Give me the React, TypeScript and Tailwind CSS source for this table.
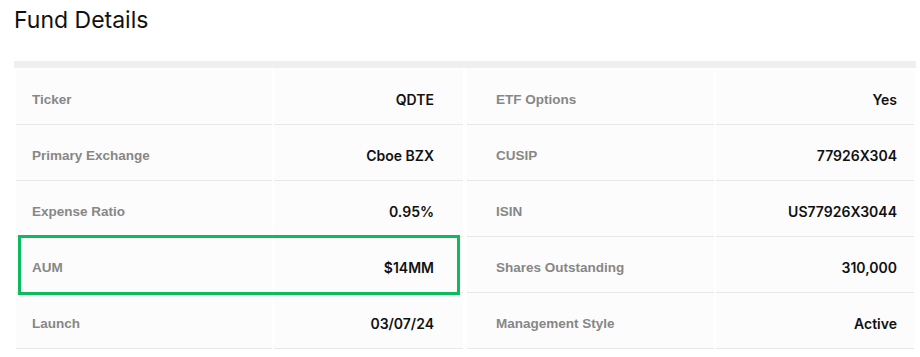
const LEFT = [
  { label: "Ticker", value: "QDTE" },
  { label: "Primary Exchange", value: "Cboe BZX" },
  { label: "Expense Ratio", value: "0.95%" },
  { label: "AUM", value: "$14MM", highlight: true },
  { label: "Launch", value: "03/07/24" },
];

const RIGHT = [
  { label: "ETF Options", value: "Yes" },
  { label: "CUSIP", value: "77926X304" },
  { label: "ISIN", value: "US77926X3044" },
  { label: "Shares Outstanding", value: "310,000" },
  { label: "Management Style", value: "Active" },
];

type Item = { label: string; value: string; highlight?: boolean };

function Column({ items, side }: { items: Item[]; side: "left" | "right" }) {
  const left = side === "left";
  return (
    <div className="relative flex flex-col">
      {items.map((it) => (
        <div key={it.label} className="relative flex gap-[2px]">
          <div
            className={
              "flex h-[56px] items-center border-b border-[#e8e8e8] bg-[#fcfcfc] pt-[7px] font-['Liberation_Sans',Arial,sans-serif] text-[13.5px] font-bold text-[#878787] " +
              (left ? "w-[256px] pl-[16px]" : "w-[247px] pl-[29px]")
            }
          >
            {it.label}
          </div>
          <div
            className={
              "flex h-[56px] flex-1 items-center justify-end border-b border-[#e8e8e8] bg-[#fcfcfc] pt-[5px] font-['Inter',sans-serif] text-[14px] font-semibold text-[#111] " +
              (left ? "pr-[29px]" : "pr-[17px]")
            }
          >
            {it.value}
          </div>
          {it.highlight && (
            <div className="pointer-events-none absolute bottom-[-2px] left-[2px] right-[3px] top-[-2px] z-10 border-[3px] border-[#0dba5c]" />
          )}
        </div>
      ))}
    </div>
  );
}

export default function App() {
  return (
    <div className="h-[357px] w-[920px] overflow-hidden bg-white">
      <h2 className="pl-[14px] pt-[4px] font-['Inter',sans-serif] text-[23px] font-normal leading-[32px] text-[#111]">
        Fund Details
      </h2>
      <div className="ml-[14px] mt-[25px] w-[902px] border-t-[7px] border-[#efefef] pt-[1px]">
        <div className="grid grid-cols-[451px_451px]">
          <div className="px-[2px]">
            <Column items={LEFT} side="left" />
          </div>
          <div className="px-[2px]">
            <Column items={RIGHT} side="right" />
          </div>
        </div>
      </div>
    </div>
  );
}
